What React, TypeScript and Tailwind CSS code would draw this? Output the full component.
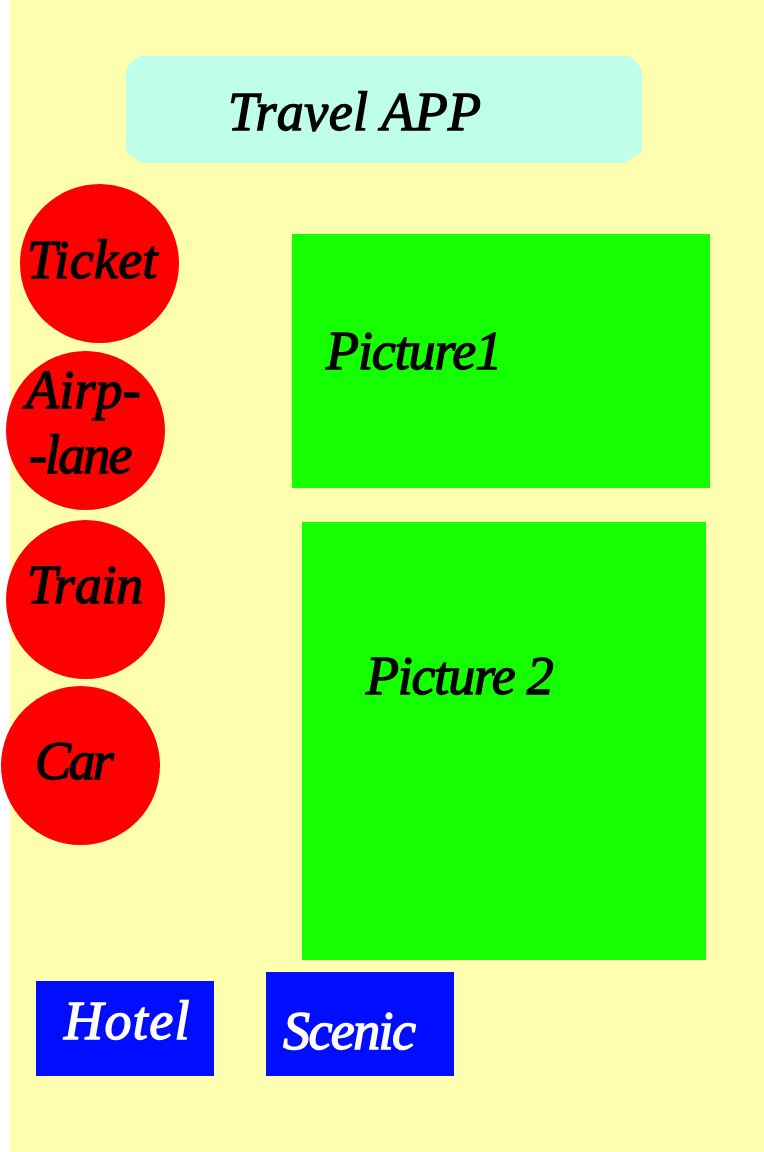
const label = "block whitespace-pre leading-[64px]";

export default function App() {
  return (
    <div className="flex h-[1152px] w-[764px] flex-col items-start border-l-[10px] border-white bg-[#ffffb0] font-['Liberation_Serif',serif] text-[54px] text-black italic [-webkit-text-stroke:1.4px_currentColor]">
      <header className="mt-[56px] ml-[116px] h-[107px] w-[516px] bg-[#bfffea] pt-[24px] pl-[102px] [clip-path:path('M0_15Q4_4_14_0H503Q512_5_516_15V94Q511_102_502_104V107H13V104Q5_102_0_96Z')]">
        <h1 className={`${label} tracking-[0.4px]`}>Travel APP</h1>
      </header>

      <main className="flex h-[797px] items-start">
        <nav className="-ml-[9px] flex w-[291px] flex-col pt-[21px]">
          <a className="ml-[19px] h-[159px] w-[159px] rounded-full bg-[#ff0000] pt-[44px] pl-[7px]">
            <span className={`${label} tracking-[0.3px]`}>Ticket</span>
          </a>
          <a className="mt-[8px] ml-[5px] h-[159px] w-[159px] rounded-full bg-[#ff0000] pt-[7px] pl-[20px]">
            <span className={`${label} tracking-[0.2px]`}>Airp-</span>
            <span className={`${label} mt-px ml-[3px] tracking-[-1.9px]`}>-lane</span>
          </a>
          <a className="mt-[10px] ml-[5px] h-[159px] w-[159px] rounded-full bg-[#ff0000] pt-[33px] pl-[21px]">
            <span className={`${label} tracking-[-0.2px]`}>Train</span>
          </a>
          <a className="mt-[7px] h-[159px] w-[159px] rounded-full bg-[#ff0000] pt-[43px] pl-[34px]">
            <span className={`${label} tracking-[-2.6px]`}>Car</span>
          </a>
        </nav>

        <div className="flex flex-col pt-[71px]">
          <section className="h-[254px] w-[418px] bg-[#15ff00] pt-[85px] pl-[34px]">
            <h2 className={`${label} tracking-[-1.1px]`}>Picture1</h2>
          </section>
          <section className="mt-[34px] ml-[10px] h-[438px] w-[404px] bg-[#15ff00] pt-[122px] pl-[64px]">
            <h2 className={`${label} tracking-[-1.2px]`}>Picture 2</h2>
          </section>
        </div>
      </main>

      <footer className="mt-[12px] ml-[26px] flex items-start gap-[52px] text-white">
        <a className="mt-[9px] h-[95px] w-[178px] bg-[#000dff] pt-[8px] pl-[28px]">
          <span className={`${label} tracking-[1.4px]`}>Hotel</span>
        </a>
        <a className="h-[104px] w-[188px] bg-[#000dff] pt-[27px] pl-[17px]">
          <span className={`${label} tracking-[-1.6px]`}>Scenic</span>
        </a>
      </footer>
    </div>
  );
}
